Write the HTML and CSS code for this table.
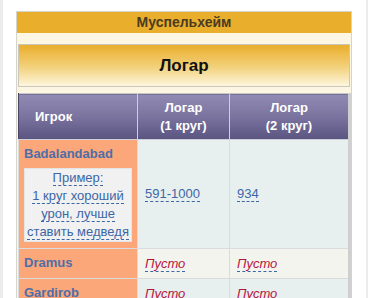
FILE: index.html
```html
<!DOCTYPE html>
<html lang="ru">
<head>
<meta charset="utf-8">
<link rel="stylesheet" href="styles.css">
</head>
<body>
<div class="page">
  <div class="box">
    <div class="realm">Муспельхейм</div>
    <div class="inner">
      <div class="boss">Логар</div>
      <table class="grid">
        <colgroup>
          <col class="c1"><col class="c2"><col class="c3">
        </colgroup>
        <thead>
          <tr>
            <th class="th-player">Игрок</th>
            <th>Логар<br>(1 круг)</th>
            <th>Логар<br>(2 круг)</th>
          </tr>
        </thead>
        <tbody>
          <tr class="odd">
            <td class="player">
              <div class="name">Badalandabad</div>
              <div class="note"><span class="dash">Пример:</span><br><span class="dash">1 круг хороший</span><br><span class="dash">урон, лучше</span><br><span class="dash">ставить медведя</span></div>
            </td>
            <td><span class="dash">591-1000</span></td>
            <td><span class="dash">934</span></td>
          </tr>
          <tr class="even">
            <td class="player"><div class="name">Dramus</div></td>
            <td><span class="dash empty">Пусто</span></td>
            <td><span class="dash empty">Пусто</span></td>
          </tr>
          <tr class="odd">
            <td class="player"><div class="name">Gardirob</div></td>
            <td><span class="dash empty">Пусто</span></td>
            <td><span class="dash empty">Пусто</span></td>
          </tr>
        </tbody>
      </table>
    </div>
  </div>
</div>
</body>
</html>
```
FILE: styles.css
```css
html, body {
  margin: 0;
  padding: 0;
}
body {
  background: #ececec;
  padding: 0 2px 0 3px;
  font-family: "Liberation Sans", Arial, sans-serif;
  font-size: 13px;
  line-height: 18px;
}
.page {
  background: #ffffff;
  padding: 11px 14px 0 13px;
  height: 298px;
  box-sizing: border-box;
}
.box {
  border: 1px solid #d6d3c8;
  border-bottom: none;
  background: #fcf6e3;
}
.realm {
  background: #e9ae2c;
  color: #4a3b22;
  font-weight: bold;
  font-size: 14px;
  text-align: center;
  height: 21px;
  line-height: 21px;
}
.inner {
  padding: 11px 1px 0 1px;
}
.boss {
  border: 1px solid #c9c6bd;
  background: linear-gradient(to bottom, #e9ae2c 0%, #f3d27e 55%, #fdf6dd 100%);
  height: 41px;
  line-height: 41px;
  text-align: center;
  font-weight: bold;
  font-size: 17px;
  color: #111;
}
.grid {
  margin-top: 6px;
  border-collapse: collapse;
  border: 1px solid #c8c8c8;
  border-right: 3px solid #cfcfcf;
  width: 333px;
  table-layout: fixed;
}
.c1 { width: 119px; }
.c2 { width: 92px; }
.c3 { width: 120px; }
.grid th {
  background: linear-gradient(to bottom, #918ab3 0%, #7a739f 50%, #5a5480 100%);
  color: #ffffff;
  font-weight: bold;
  font-size: 13px;
  line-height: 18px;
  height: 46px;
  padding: 0 4px;
  border: 1px solid #cfcfd8;
  border-top: none;
  text-align: center;
  box-sizing: border-box;
}
.grid th.th-player {
  text-align: left;
  padding-left: 16px;
  border-left: 1px solid #4b4668;
}
.grid td {
  border: 1px solid #d9dcdc;
  padding: 5px 7px;
  vertical-align: middle;
}
.grid td.player {
  background: #fca779;
  padding: 5px 5px 6px 5px;
  vertical-align: top;
}
.odd td { background: #e8efef; }
.even td { background: #f4f4ef; }
.name {
  color: #4e6ea8;
  font-weight: bold;
}
.note {
  margin-top: 5px;
  background: #f1f1f1;
  border: 1px solid #e4e4e4;
  text-align: center;
  width: 106px;
  padding: 0;
}
.dash {
  color: #3c67a7;
  border-bottom: 1px dashed #3c67a7;
}
.empty {
  color: #b3163f;
  font-style: italic;
}
```
